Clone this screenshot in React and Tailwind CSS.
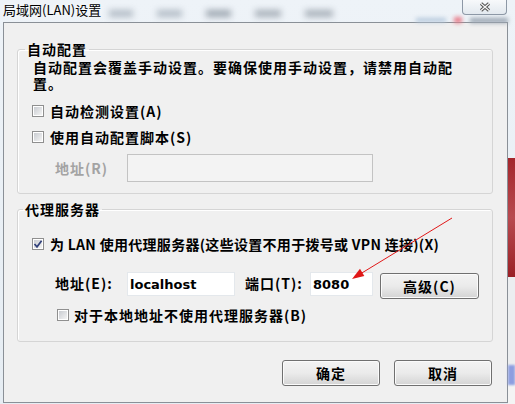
import React from 'react';

const CheckBox = ({ checked }) => (
  <span className="w-[12px] h-[12px] shrink-0 border border-[#8f8f8f] bg-white flex items-center justify-center">
    <span className="w-[8px] h-[8px] bg-gradient-to-br from-[#c9ccd1] to-[#f4f4f4] flex items-center justify-center">
      {checked && (
        <svg width="10" height="10" viewBox="0 0 10 10" className="overflow-visible">
          <path d="M1.5 5 L4 7.8 L8.6 1.8" fill="none" stroke="#31407a" strokeWidth="1.7" />
        </svg>
      )}
    </span>
  </span>
);

const WinButton = ({ children, className = '' }) => (
  <button
    className={`h-[26px] rounded-[3px] border border-[#707070] bg-gradient-to-b from-[#f3f3f3] via-[#ebebeb] to-[#d4d4d4] shadow-[inset_0_0_0_1px_#fbfbfb] text-[14px] font-bold tracking-[1px] text-black ${className}`}
  >
    {children}
  </button>
);

export default function App() {
  return (
    <div className="relative w-[515px] h-[404px] overflow-hidden flex bg-gradient-to-b from-[#eef3f8] to-[#e6edf3] font-['Noto_Sans_CJK_SC','Liberation_Sans',sans-serif] text-black">
      <div className="w-[508px] flex flex-col">
        {/* title bar */}
        <div className="h-[22px] flex items-start pl-[3px] pt-[2px]">
          <span className="text-[13px] leading-[16px] [text-shadow:0_0_6px_#fff]">局域网(LAN)设置</span>
          <div className="flex gap-[24px] ml-[8px] mt-[8px]">
            <span className="w-[24px] h-[7px] bg-[#b3bcc6] blur-[3px]" />
            <span className="w-[25px] h-[7px] bg-[#b3bcc6] blur-[3px]" />
            <span className="w-[25px] h-[7px] bg-[#9ea7b1] blur-[3px]" />
            <span className="w-[26px] h-[7px] bg-[#a8b0b9] blur-[3px]" />
            <span className="w-[28px] h-[7px] bg-[#a8b0b9] blur-[3px]" />
          </div>
          <div className="flex items-center gap-[8px] ml-auto mt-[15px]">
            <span className="w-[30px] h-[4px] bg-[#b4c7dc] blur-[2px]" />
            <span className="w-[8px] h-[6px] bg-[#e87b89] blur-[2px]" />
            <span className="w-[38px] h-[5px] bg-[#9aa5b2] blur-[2px]" />
          </div>
        </div>

        {/* dialog body */}
        <div className="ml-[3px] w-[505px] h-[381px] border border-[#8a9097] bg-[#f0f0f0] flex flex-col">
          <fieldset className="mt-[18px] ml-[13px] w-[476px] border border-[#d5d5d5] rounded-[3px] shadow-[inset_1px_1px_0_#fff] pl-[14px] pb-[11px]">
            <legend className="-ml-[7px] px-[2px] text-[14px] leading-[16px] font-bold tracking-[1px]">自动配置</legend>
            <p className="mt-[2px] ml-[1px] text-[14px] leading-[16px] font-bold tracking-[1px] whitespace-nowrap">
              自动配置会覆盖手动设置。要确保使用手动设置，请禁用自动配
              <br />
              置。
            </p>
            <label className="mt-[12px] h-[16px] flex items-center gap-[6px] text-[14px] leading-[16px] font-bold tracking-[1px]">
              <CheckBox />
              自动检测设置(A)
            </label>
            <label className="mt-[10px] h-[16px] flex items-center gap-[6px] text-[14px] leading-[16px] font-bold tracking-[1px]">
              <CheckBox />
              使用自动配置脚本(S)
            </label>
            <div className="mt-[9px] ml-[23px] flex items-center">
              <span className="w-[72px] text-[14px] leading-[16px] font-bold tracking-[1px] text-[#a3a3a3]">地址(R)</span>
              <div className="w-[246px] h-[28px] border border-[#c3c3c3] bg-[#f3f3f3]" />
            </div>
          </fieldset>

          <fieldset className="mt-[7px] ml-[13px] w-[476px] border border-[#d5d5d5] rounded-[3px] shadow-[inset_1px_1px_0_#fff] pl-[14px] pb-[18px]">
            <legend className="-ml-[9px] px-[2px] text-[14px] leading-[16px] font-bold tracking-[1px]">代理服务器</legend>
            <label className="mt-[19px] h-[16px] flex items-center gap-[6px] text-[14px] leading-[16px] font-bold tracking-[0.3px] whitespace-nowrap">
              <CheckBox checked />
              为 LAN 使用代理服务器(这些设置不用于拨号或 VPN 连接)(X)
            </label>
            <div className="mt-[20px] ml-[23px] h-[26px] flex items-start">
              <span className="w-[72px] mt-[3px] text-[14px] leading-[16px] font-bold tracking-[1px]">地址(E):</span>
              <input
                readOnly
                defaultValue="localhost"
                className="w-[108px] h-[24px] px-[2px] bg-white border border-[#e4e8ec] outline-none text-[13px] font-bold font-['DejaVu_Sans',sans-serif] text-black"
              />
              <span className="w-[65px] ml-[10px] mt-[3px] text-[14px] leading-[16px] font-bold tracking-[1px]">端口(T):</span>
              <input
                readOnly
                defaultValue="8080"
                className="w-[63px] h-[24px] px-[2px] bg-white border border-[#e4e8ec] outline-none text-[13px] font-bold font-['DejaVu_Sans',sans-serif] text-black"
              />
              <WinButton className="ml-[7px] mt-[1px] w-[99px]">高级(C)</WinButton>
            </div>
            <label className="mt-[9px] ml-[25px] h-[16px] flex items-center gap-[5px] text-[14px] leading-[16px] font-bold tracking-[1px] whitespace-nowrap">
              <CheckBox />
              对于本地地址不使用代理服务器(B)
            </label>
          </fieldset>

          <div className="mt-[18px] flex justify-end gap-[14px] pr-[15px]">
            <WinButton className="w-[98px]">确定</WinButton>
            <WinButton className="w-[98px]">取消</WinButton>
          </div>
        </div>
      </div>

      {/* what shows behind the window on the right */}
      <div className="w-[7px] flex flex-col">
        <div className="h-[158px]" />
        <div className="h-[119px] bg-gradient-to-b from-[#a3262c] via-[#b84a50] to-[#9a1f25]" />
        <div className="h-[88px] bg-[#eceef0]" />
        <div className="h-[20px] bg-[#8e9ee0] blur-[1px]" />
        <div className="flex-1 bg-[#f4f4f4]" />
      </div>

      {/* close button */}
      <div className="absolute left-[462px] top-0 w-[45px] h-[15px] border border-t-0 border-[#8d98a6] rounded-b-[4px] bg-gradient-to-b from-[#f7f9fb] to-[#e3e9ef] flex items-center justify-center">
        <svg width="12" height="10" viewBox="0 0 12 10">
          <path d="M2 1.5 L10 8.5 M10 1.5 L2 8.5" stroke="#4d4d4d" strokeWidth="3.2" />
          <path d="M2 1.5 L10 8.5 M10 1.5 L2 8.5" stroke="#f5f5f5" strokeWidth="1.3" />
        </svg>
      </div>

      {/* red annotation arrow */}
      <svg className="absolute left-0 top-0 pointer-events-none" width="515" height="404">
        <line x1="452" y1="218" x2="361" y2="273.5" stroke="#e01818" strokeWidth="1" />
        <polygon points="352,279 364.3,276 360,268.8" fill="#e01818" />
      </svg>
    </div>
  );
}
